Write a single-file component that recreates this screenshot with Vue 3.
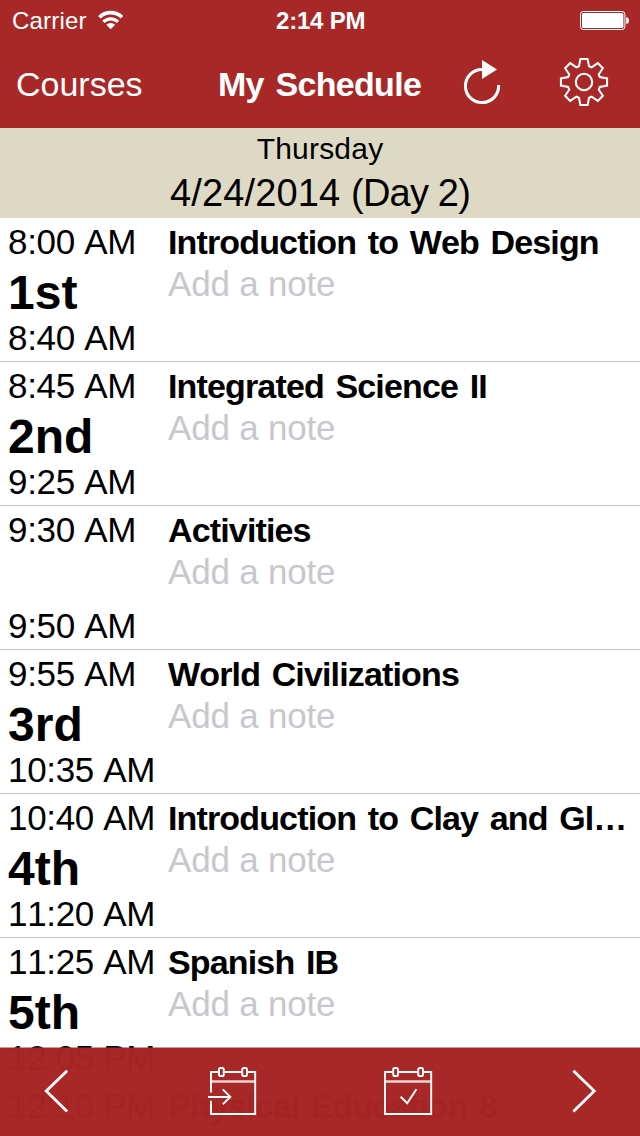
<script setup>
const periods = [
  { start: '8:00 AM', name: '1st', end: '8:40 AM', title: 'Introduction to Web Design' },
  { start: '8:45 AM', name: '2nd', end: '9:25 AM', title: 'Integrated Science II' },
  { start: '9:30 AM', name: '', end: '9:50 AM', title: 'Activities' },
  { start: '9:55 AM', name: '3rd', end: '10:35 AM', title: 'World Civilizations' },
  { start: '10:40 AM', name: '4th', end: '11:20 AM', title: 'Introduction to Clay and Gl…' },
  { start: '11:25 AM', name: '5th', end: '12:05 PM', title: 'Spanish IB' },
  { start: '12:10 PM', name: '', end: '', title: 'Physical Education 8', last: true },
]

// One gear tooth, repeated around the centre every 45 degrees
const tooth = [[-5, -15.8], [-3.6, -23.1], [3.6, -23.1], [5, -15.8]]
const gear = Array.from({ length: 8 }, (_, i) => {
  const a = (i * Math.PI) / 4
  return tooth
    .map(([x, y]) => `${(x * Math.cos(a) - y * Math.sin(a)).toFixed(2)},${(x * Math.sin(a) + y * Math.cos(a)).toFixed(2)}`)
    .join(' ')
}).join(' ')
</script>

<template>
  <div class="screen">
    <header>
      <div class="status">
        <div class="carrier">
          <span>Carrier</span>
          <svg width="26" height="20" viewBox="98 10 26 20">
            <path d="M99.4 17.2 A16.3 16.3 0 0 1 122 17.2" fill="none" stroke="#fff" stroke-width="3.6" />
            <path d="M103.4 21.9 A10.2 10.2 0 0 1 118 21.9" fill="none" stroke="#fff" stroke-width="3.3" />
            <path d="M110.7 29.2 L106.3 24.8 A6 6 0 0 1 115.1 24.8 Z" fill="#fff" />
          </svg>
        </div>
        <div class="clock">2:14 PM</div>
        <svg class="battery" width="50" height="20" viewBox="580 11 50 20">
          <rect x="580.5" y="11.5" width="44.4" height="18" rx="2.8" fill="none" stroke="#fff" />
          <rect x="582" y="13" width="41.4" height="15" rx="1.6" fill="#fff" />
          <path d="M626.2 17 Q629 17.5 629 20.5 Q629 23.5 626.2 24 Z" fill="#fff" />
        </svg>
      </div>
      <nav>
        <span class="back">Courses</span>
        <span class="heading">My Schedule</span>
        <svg width="44" height="52" viewBox="460 56 44 52">
          <path d="M482 69.4 A16.6 16.6 0 1 0 498.6 85" fill="none" stroke="#fff" stroke-width="3" />
          <path d="M482 60 L497 69.5 L482 79 Z" fill="#fff" />
        </svg>
        <svg width="52" height="52" viewBox="-26 -26 52 52">
          <polygon :points="gear" fill="none" stroke="#fff" stroke-width="2" />
          <circle r="8.2" fill="none" stroke="#fff" stroke-width="2.1" />
        </svg>
      </nav>
    </header>

    <section class="date">
      <div class="weekday">Thursday</div>
      <div class="day">4/24/2014 <span class="cycle">(Day 2)</span></div>
    </section>

    <main>
      <article v-for="p in periods" :key="p.start" class="row">
        <div class="times">
          <div class="start">{{ p.start }}</div>
          <div class="period">{{ p.name }}</div>
          <div class="end">{{ p.end }}</div>
        </div>
        <div class="course">
          <div class="title">{{ p.title }}</div>
          <div v-if="!p.last" class="note">Add a note</div>
        </div>
      </article>
    </main>

    <footer>
      <svg width="32" height="52" viewBox="40 1065 32 52">
        <path d="M67.2 1070.8 L46.2 1091 L67.2 1111.4" class="chevron" />
      </svg>
      <svg width="50" height="52" viewBox="208 1065 50 52">
        <g class="line">
          <path d="M218 1072 H211 V1092.5 M211 1100.8 V1114 H255.2 V1072 H247.5 M224.5 1072 H241.5" />
          <path d="M211 1081.5 H255" class="rule" />
          <rect x="219" y="1068" width="4.8" height="8" rx="1.6" />
          <rect x="242.2" y="1068" width="4.8" height="8" rx="1.6" />
          <path d="M208 1097 H230.4 M222.8 1089.4 L230.4 1097 L222.8 1104.2" />
        </g>
      </svg>
      <svg width="50" height="52" viewBox="384 1065 50 52">
        <g class="line">
          <path d="M392.5 1072 H385 V1114 H431.2 V1072 H423.5 M398.5 1072 H417.5" />
          <path d="M385 1081.5 H431" class="rule" />
          <rect x="393.2" y="1068" width="4.8" height="8" rx="1.6" />
          <rect x="418.2" y="1068" width="4.8" height="8" rx="1.6" />
          <path d="M400.6 1096.8 L407.2 1103.2 L416.4 1089.2" />
        </g>
      </svg>
      <svg width="32" height="52" viewBox="568 1065 32 52">
        <path d="M573.4 1070.8 L594.2 1091 L573.4 1111.4" class="chevron" />
      </svg>
    </footer>
  </div>
</template>

<style>
body { margin: 0; background: #fff; }
</style>

<style scoped>
.screen {
  position: relative;
  width: 640px;
  height: 1136px;
  overflow: hidden;
  background: #fff;
  color: #000;
  font-family: "Liberation Sans", Arial, sans-serif;
  font-kerning: none;
  white-space: nowrap;
}
svg { display: block; }
header { height: 128px; background: #a82828; color: #fff; }
.status {
  display: grid;
  grid-template-columns: 264px 304px 50px;
  padding-left: 12px;
  height: 40px;
  font-size: 24px;
  line-height: 41px;
}
.carrier { display: flex; gap: 11px; letter-spacing: 0.2px; }
.carrier svg { margin-top: 10px; }
.clock { font-weight: bold; letter-spacing: -0.2px; }
.battery { margin-top: 11px; }
nav {
  display: grid;
  grid-template-columns: 202px 242px 98px 52px;
  padding-left: 16px;
  height: 88px;
  padding-top: 16px;
  box-sizing: border-box;
  font-size: 34px;
  line-height: 57px;
}
.heading { font-weight: bold; letter-spacing: -0.7px; word-spacing: 3px; }
.date { height: 90px; background: #ded9c5; text-align: center; }
.weekday { font-size: 30px; line-height: 42px; letter-spacing: 0.2px; }
.day { font-size: 38px; line-height: 46px; letter-spacing: 0.15px; }
.cycle { letter-spacing: -0.8px; }
.row {
  display: grid;
  grid-template-columns: 160px 464px;
  padding: 3px 8px 0;
  height: 144px;
  box-sizing: border-box;
  border-bottom: 1px solid #c8c7cc;
  font-size: 34px;
}
.start,
.end { font-size: 35px; letter-spacing: -0.33px; }
.start { height: 42px; line-height: 42px; }
.period { height: 60px; font-size: 48px; line-height: 60px; font-weight: bold; }
.end { height: 30px; line-height: 30px; }
.title {
  height: 42px;
  line-height: 42px;
  font-weight: bold;
  letter-spacing: -0.85px;
  word-spacing: 3px;
}
.note { font-size: 35px; line-height: 42px; letter-spacing: -0.2px; color: #c7c7cd; }
footer {
  position: absolute;
  left: 0;
  bottom: 0;
  width: 640px;
  height: 89px;
  box-sizing: border-box;
  border-top: 1px solid rgba(110, 70, 70, 0.5);
  padding: 17px 0 0 40px;
  display: grid;
  grid-template-columns: 168px 176px 184px 32px;
  background: rgba(167, 37, 37, 0.983);
  background-clip: padding-box;
}
.chevron { fill: none; stroke: #fff; stroke-width: 2.8; }
.line { fill: none; stroke: #fff; stroke-width: 1.9; }
.rule { stroke-width: 2.6; opacity: 0.8; }
</style>
